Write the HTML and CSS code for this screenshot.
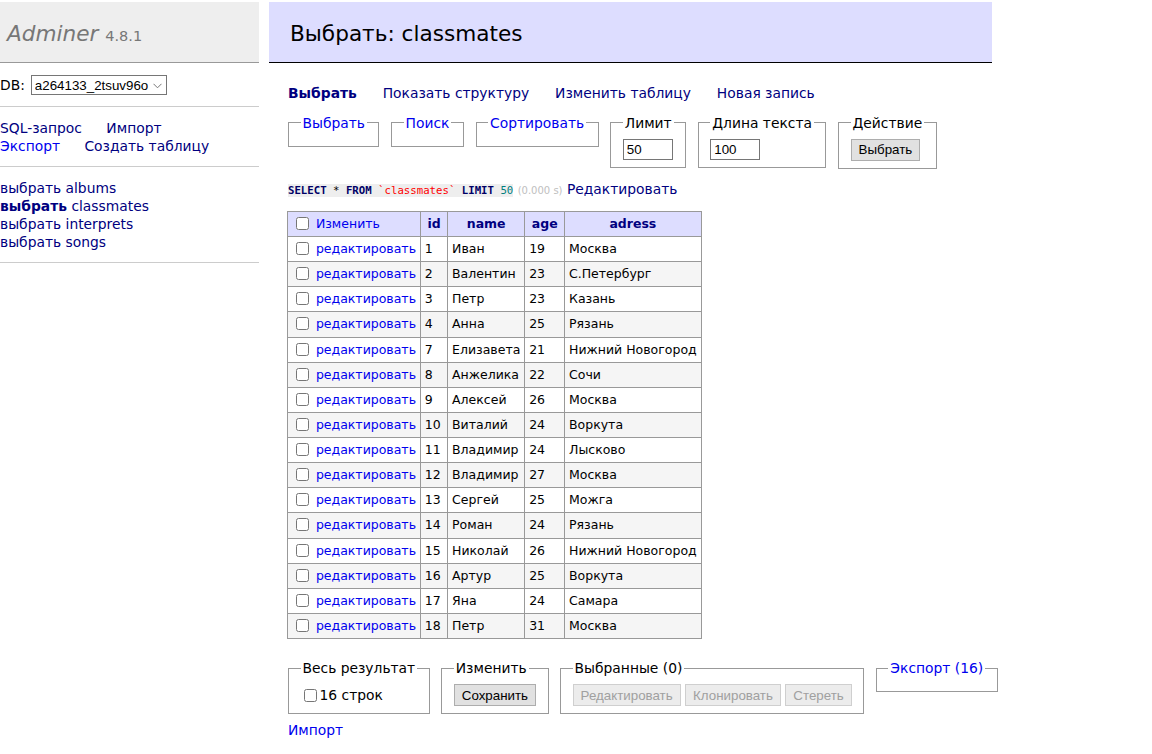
FILE: index.html
```html
<!DOCTYPE html>
<html lang="ru">
<head>
<meta charset="utf-8">
<title>Выбрать: classmates - Adminer</title>
<link rel="stylesheet" href="styles.css">
</head>
<body>
<div class="page">
  <div class="menu">
    <h1><a href="#" class="h1link">Adminer</a> <span class="version">4.8.1</span></h1>
    <p class="dbs">DB: <span class="selwrap"><select class="dbsel"><option>a264133_2tsuv96o</option></select><svg class="chev" width="9" height="6" viewBox="0 0 9 6"><path d="M0.5 0.8 L4.5 4.8 L8.5 0.8" fill="none" stroke="#777" stroke-width="1"/></svg></span></p>
    <p class="links menu-links">
      <a href="#" class="vis">SQL-запрос</a>
      <a href="#" class="vis">Импорт</a><br>
      <a href="#">Экспорт</a>
      <a href="#" class="vis">Создать таблицу</a>
    </p>
    <ul class="tables">
      <li><a href="#" class="vis">выбрать</a> <a href="#" class="vis">albums</a></li>
      <li><a href="#" class="vis active">выбрать</a> <a href="#" class="vis">classmates</a></li>
      <li><a href="#" class="vis">выбрать</a> <a href="#" class="vis">interprets</a></li>
      <li><a href="#" class="vis">выбрать</a> <a href="#" class="vis">songs</a></li>
    </ul>
  </div>

  <div class="content">
    <h2>Выбрать: classmates</h2>
    <p class="links nav">
      <a href="#" class="vis active">Выбрать</a>
      <a href="#" class="vis">Показать структуру</a>
      <a href="#" class="vis">Изменить таблицу</a>
      <a href="#" class="vis">Новая запись</a>
    </p>
    <form class="filters">
      <fieldset><legend><a href="#">Выбрать</a></legend></fieldset>
      <fieldset><legend><a href="#">Поиск</a></legend></fieldset>
      <fieldset><legend><a href="#">Сортировать</a></legend></fieldset>
      <fieldset><legend>Лимит</legend><div><input type="text" class="size" value="50"></div></fieldset>
      <fieldset><legend>Длина текста</legend><div><input type="text" class="size" value="100"></div></fieldset>
      <fieldset><legend>Действие</legend><div><button type="button" class="btn">Выбрать</button></div></fieldset>
    </form>
    <p class="sql"><code class="jush"><span class="kw">SELECT</span> * <span class="kw">FROM</span> <span class="bac">`classmates`</span> <span class="kw">LIMIT</span> <span class="num">50</span></code> <span class="time">(0.000 s)</span> <a href="#" class="vis">Редактировать</a></p>

    <table class="data">
      <thead>
        <tr>
          <td><input type="checkbox" class="cb"> <a href="#">Изменить</a></td>
          <th><a href="#" class="vis">id</a></th>
          <th><a href="#" class="vis">name</a></th>
          <th><a href="#" class="vis">age</a></th>
          <th><a href="#" class="vis">adress</a></th>
        </tr>
      </thead>
      <tbody>
        <tr><td><input type="checkbox" class="cb"> <a href="#">редактировать</a></td><td>1</td><td>Иван</td><td>19</td><td>Москва</td></tr>
        <tr class="odd"><td><input type="checkbox" class="cb"> <a href="#">редактировать</a></td><td>2</td><td>Валентин</td><td>23</td><td>С.Петербург</td></tr>
        <tr><td><input type="checkbox" class="cb"> <a href="#">редактировать</a></td><td>3</td><td>Петр</td><td>23</td><td>Казань</td></tr>
        <tr class="odd"><td><input type="checkbox" class="cb"> <a href="#">редактировать</a></td><td>4</td><td>Анна</td><td>25</td><td>Рязань</td></tr>
        <tr><td><input type="checkbox" class="cb"> <a href="#">редактировать</a></td><td>7</td><td>Елизавета</td><td>21</td><td>Нижний Новогород</td></tr>
        <tr class="odd"><td><input type="checkbox" class="cb"> <a href="#">редактировать</a></td><td>8</td><td>Анжелика</td><td>22</td><td>Сочи</td></tr>
        <tr><td><input type="checkbox" class="cb"> <a href="#">редактировать</a></td><td>9</td><td>Алексей</td><td>26</td><td>Москва</td></tr>
        <tr class="odd"><td><input type="checkbox" class="cb"> <a href="#">редактировать</a></td><td>10</td><td>Виталий</td><td>24</td><td>Воркута</td></tr>
        <tr><td><input type="checkbox" class="cb"> <a href="#">редактировать</a></td><td>11</td><td>Владимир</td><td>24</td><td>Лысково</td></tr>
        <tr class="odd"><td><input type="checkbox" class="cb"> <a href="#">редактировать</a></td><td>12</td><td>Владимир</td><td>27</td><td>Москва</td></tr>
        <tr><td><input type="checkbox" class="cb"> <a href="#">редактировать</a></td><td>13</td><td>Сергей</td><td>25</td><td>Можга</td></tr>
        <tr class="odd"><td><input type="checkbox" class="cb"> <a href="#">редактировать</a></td><td>14</td><td>Роман</td><td>24</td><td>Рязань</td></tr>
        <tr><td><input type="checkbox" class="cb"> <a href="#">редактировать</a></td><td>15</td><td>Николай</td><td>26</td><td>Нижний Новогород</td></tr>
        <tr class="odd"><td><input type="checkbox" class="cb"> <a href="#">редактировать</a></td><td>16</td><td>Артур</td><td>25</td><td>Воркута</td></tr>
        <tr><td><input type="checkbox" class="cb"> <a href="#">редактировать</a></td><td>17</td><td>Яна</td><td>24</td><td>Самара</td></tr>
        <tr class="odd"><td><input type="checkbox" class="cb"> <a href="#">редактировать</a></td><td>18</td><td>Петр</td><td>31</td><td>Москва</td></tr>
      </tbody>
    </table>

    <div class="footer">
      <fieldset><legend>Весь результат</legend><div><label class="all"><input type="checkbox" class="cb">16 строк</label></div></fieldset>
      <fieldset><legend>Изменить</legend><div><button type="button" class="btn">Сохранить</button></div></fieldset>
      <fieldset><legend>Выбранные (0)</legend><div><button type="button" class="btn" disabled>Редактировать</button> <button type="button" class="btn" disabled>Клонировать</button> <button type="button" class="btn" disabled>Стереть</button></div></fieldset>
      <fieldset><legend><a href="#">Экспорт (16)</a></legend></fieldset>
    </div>
    <p class="import"><a href="#">Импорт</a></p>
  </div>
</div>
</body>
</html>
```

FILE: styles.css
```css
html, body {
  margin: 0;
  padding: 0;
  background: #fff;
}
body {
  color: #000;
  font: 13.85px/18px "DejaVu Sans", Verdana, sans-serif;
}
a {
  color: #0000ee;
  text-decoration: none;
}
a.vis {
  color: #000080;
}
.page {
  display: flex;
  align-items: flex-start;
  padding-top: 2px;
}
.menu {
  width: 259px;
  flex: none;
}
h1 {
  font-size: 21.6px;
  line-height: 27px;
  height: 27px;
  margin: 0;
  padding: 18px 7px 15px;
  border-bottom: 1px solid #999;
  font-weight: normal;
  color: #777;
  background: #eee;
}
.h1link {
  color: #777;
  font-style: italic;
}
.version {
  color: #777;
  font-size: 14.5px;
  line-height: 1;
}
.menu p, .tables {
  margin: 0;
  padding: 11.5px 0;
  border-bottom: 1px solid #ccc;
}
.dbs {
  display: flex;
  align-items: center;
  gap: 6px;
}
.menu p.dbs {
  padding: 12px 0 11px;
}
.selwrap {
  position: relative;
  display: inline-block;
  height: 20px;
}
.dbsel {
  appearance: none;
  -webkit-appearance: none;
  font: 13.33px "Liberation Sans", Arial, sans-serif;
  width: 136px;
  height: 20px;
  border: 1px solid #767676;
  border-radius: 0;
  background: #fff;
  color: #000;
  padding: 0 14px 0 3px;
  margin: 0;
  display: block;
}
.chev {
  position: absolute;
  right: 5px;
  top: 8px;
  pointer-events: none;
}
.tables {
  list-style: none;
  white-space: nowrap;
}
.links a {
  white-space: nowrap;
  margin-right: 20px;
}
.nav a {
  margin-right: 21.5px;
}
.active {
  font-weight: bold;
}
.content {
  margin-left: 29px;
  width: 704px;
  padding-bottom: 20px;
}
h2 {
  font-size: 21.6px;
  line-height: 27px;
  margin: 0 0 21px -19px;
  padding: 18px 21px 15px;
  border-bottom: 1px solid #000;
  color: #000;
  font-weight: normal;
  background: #ddf;
}
p {
  margin: 0;
}
form {
  margin: 0;
}
fieldset {
  display: inline-block;
  vertical-align: top;
  padding: 7.2px 11.5px;
  margin: 11.5px 7.2px 0 0;
  border: 1px solid #999;
  min-width: 0;
}
legend {
  padding: 0 2px;
}
.size {
  box-sizing: border-box;
  width: 50px;
  height: 21px;
  font: 13.33px "Liberation Sans", Arial, sans-serif;
  border: 1px solid #767676;
  padding: 1px 3px;
  vertical-align: middle;
  margin: 0;
}
.btn {
  font: 13.33px "Liberation Sans", Arial, sans-serif;
  color: #000;
  background: #e1e1e1;
  border: 1px solid #adadad;
  border-radius: 0;
  padding: 1px 7px;
  height: 22px;
  margin: 0;
  vertical-align: middle;
}
.btn:disabled {
  color: #a0a0a0;
  background: #ececec;
  border-color: #cfcfcf;
}
.sql {
  margin-top: 11px;
}
.jush {
  font: 10.7px/1.25 "DejaVu Sans Mono", "Liberation Mono", monospace;
  background: #eee;
}
.kw {
  color: #000066;
  font-weight: bold;
}
.bac {
  color: red;
}
.num {
  color: #007f7f;
}
.time {
  color: silver;
  font-size: 10px;
  line-height: 1;
}
table.data {
  margin: 13px 0 0 -1px;
  border-collapse: collapse;
  font-size: 12.5px;
}
.data td, .data th {
  border: 1px solid #999;
  padding: 3px 3.9px 3px;
  height: 18.13px;
  line-height: 16px;
  text-align: left;
  white-space: nowrap;
}
.data thead th {
  text-align: center;
  padding: 3px 6.5px;
  background: #ddf;
  font-weight: bold;
}
.data thead td {
  background: #ddf;
}
.data tr.odd td {
  background: #f5f5f5;
}
.cb {
  width: 13px;
  height: 13px;
  margin: 0 3px 0 4px;
  vertical-align: -2px;
}
.footer {
  margin-right: -20px;
  padding-top: 20px;
  white-space: nowrap;
}
.footer fieldset {
  margin-top: 0;
}
.all {
  display: inline-flex;
  align-items: center;
  padding-top: 2px;
}
.all .cb {
  margin: 0 3px 0 3px;
}
.import {
  margin-top: 7px;
}
```
